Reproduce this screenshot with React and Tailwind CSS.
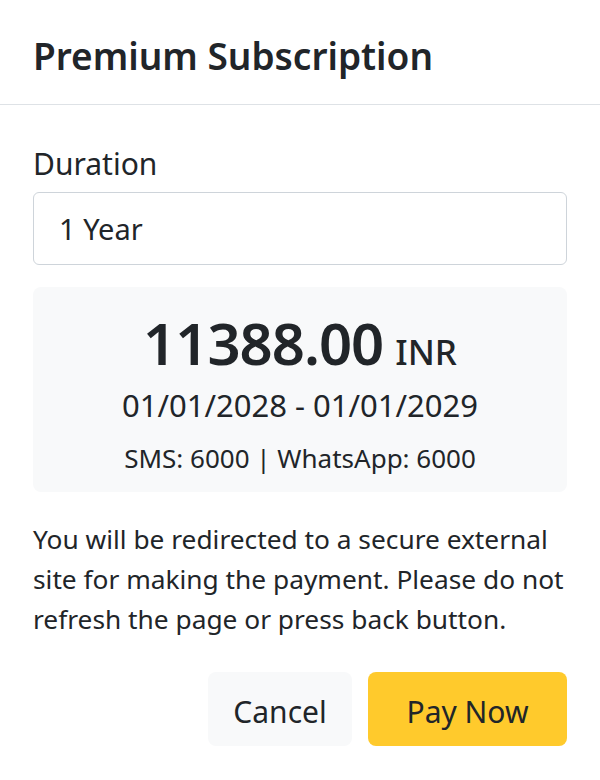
export default function App() {
  return (
    <div
      className="w-[600px] h-[780px] bg-white text-[#212529]"
      style={{ fontFamily: '"Noto Sans", "Open Sans", sans-serif' }}
    >
      <div className="flex h-[105px] items-center border-b border-[#dee2e6] px-[33px] pt-[6px]">
        <h2 className="text-[37px] font-semibold leading-none">Premium Subscription</h2>
      </div>

      <div className="px-[33px] pt-[39px]">
        <label className="block text-[30px] leading-[40px]">Duration</label>
        <div className="mt-[8px] flex h-[73px] items-center rounded-[6px] border border-[#ced4da] px-[25px] text-[29px]">
          1 Year
        </div>

        <div className="mt-[22px] flex h-[205px] flex-col items-center rounded-[8px] bg-[#f8f9fa] pt-[27px]">
          <div className="flex items-baseline gap-[12px] leading-none">
            <span className="text-[58px] font-semibold tracking-[-1px]">11388.00</span>
            <span className="text-[35px] font-medium">INR</span>
          </div>
          <div className="mt-[13px] text-[31px] leading-[40px]">01/01/2028 - 01/01/2029</div>
          <div className="mt-[15px] text-[26px] leading-[36px]">SMS: 6000 | WhatsApp: 6000</div>
        </div>

        <p className="mt-[27px] text-[26.3px] leading-[40px]">
          You will be redirected to a secure external site for making the payment. Please do not
          refresh the page or press back button.
        </p>

        <div className="mt-[33px] flex justify-end gap-[16px]">
          <button className="h-[74px] w-[144px] rounded-[8px] bg-[#f8f9fa] pt-[4px] text-[30px]">Cancel</button>
          <button className="h-[74px] w-[199px] rounded-[8px] bg-[#ffca2c] pt-[4px] text-[30px]">Pay Now</button>
        </div>
      </div>
    </div>
  );
}
